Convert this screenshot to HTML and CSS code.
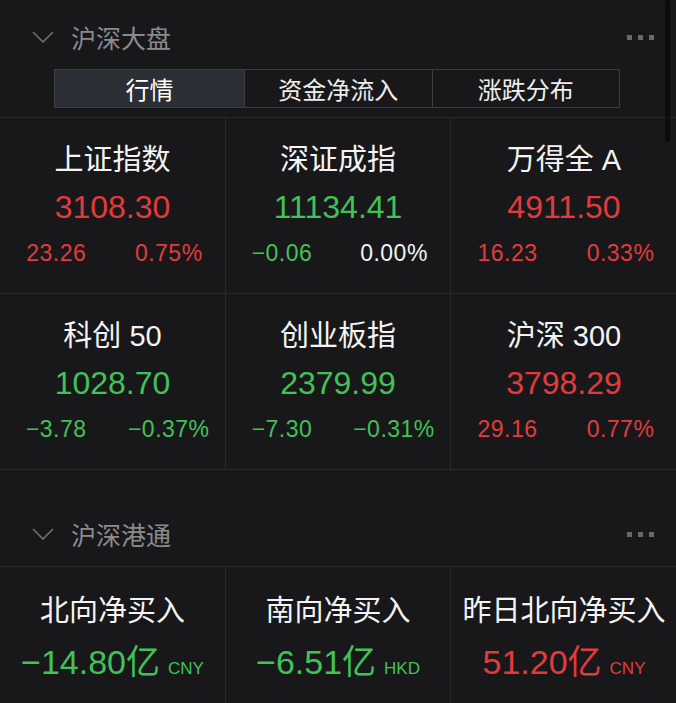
FILE: index.html
```html
<!DOCTYPE html>
<html lang="zh">
<head>
<meta charset="utf-8">
<link rel="stylesheet" href="styles.css">
</head>
<body>
<div class="page">
  <section class="block">
    <div class="sec-head">
      <svg class="chev" width="22" height="12" viewBox="0 0 22 12"><path d="M1 1 L11 11 L21 1" fill="none" stroke="#6f6f72" stroke-width="1.6"/></svg>
      <span class="sec-title">沪深大盘</span>
      <span class="more"><i></i><i></i><i></i></span>
    </div>
    <div class="tabs">
      <div class="tab active">行情</div>
      <div class="tab">资金净流入</div>
      <div class="tab">涨跌分布</div>
    </div>
    <div class="grid">
      <div class="cell">
        <div class="name">上证指数</div>
        <div class="value up">3108.30</div>
        <div class="chg up"><span>23.26</span><span>0.75%</span></div>
      </div>
      <div class="cell">
        <div class="name">深证成指</div>
        <div class="value down">11134.41</div>
        <div class="chg"><span class="down">−0.06</span><span class="flat">0.00%</span></div>
      </div>
      <div class="cell">
        <div class="name">万得全 A</div>
        <div class="value up">4911.50</div>
        <div class="chg up"><span>16.23</span><span>0.33%</span></div>
      </div>
      <div class="cell">
        <div class="name">科创 50</div>
        <div class="value down">1028.70</div>
        <div class="chg down"><span>−3.78</span><span>−0.37%</span></div>
      </div>
      <div class="cell">
        <div class="name">创业板指</div>
        <div class="value down">2379.99</div>
        <div class="chg down"><span>−7.30</span><span>−0.31%</span></div>
      </div>
      <div class="cell">
        <div class="name">沪深 300</div>
        <div class="value up">3798.29</div>
        <div class="chg up"><span>29.16</span><span>0.77%</span></div>
      </div>
    </div>
  </section>
  <section class="block">
    <div class="sec-head sec-head2">
      <svg class="chev" width="22" height="12" viewBox="0 0 22 12"><path d="M1 1 L11 11 L21 1" fill="none" stroke="#6f6f72" stroke-width="1.6"/></svg>
      <span class="sec-title">沪深港通</span>
      <span class="more"><i></i><i></i><i></i></span>
    </div>
    <div class="grid grid2">
      <div class="cell cell2">
        <div class="name">北向净买入</div>
        <div class="value2 down">−14.80<span class="yi">亿</span><span class="cur">CNY</span></div>
      </div>
      <div class="cell cell2">
        <div class="name">南向净买入</div>
        <div class="value2 down">−6.51<span class="yi">亿</span><span class="cur">HKD</span></div>
      </div>
      <div class="cell cell2">
        <div class="name">昨日北向净买入</div>
        <div class="value2 up">51.20<span class="yi">亿</span><span class="cur">CNY</span></div>
      </div>
    </div>
  </section>
  <div class="scroll-thumb"></div>
</div>
</body>
</html>
```

FILE: styles.css
```css
html, body {
  margin: 0;
  padding: 0;
  background: #18181a;
}
body {
  width: 676px;
  height: 703px;
  overflow: hidden;
  font-family: "Liberation Sans", "Noto Sans CJK SC", sans-serif;
  color: #f3f3f3;
}
.page {
  position: relative;
  width: 676px;
  height: 703px;
  overflow: hidden;
}
.sec-head {
  display: flex;
  align-items: center;
  height: 64px;
  padding-top: 5px;
  padding-left: 32px;
  padding-right: 22px;
}
.sec-head2 {
  padding-top: 32px;
}
.chev {
  display: block;
  width: 22px;
  height: 12px;
}
.sec-title {
  margin-left: 17px;
  font-family: "Noto Sans CJK SC", sans-serif;
  font-size: 25px;
  color: #8b8b8e;
}
.more {
  margin-left: auto;
  display: flex;
  gap: 6px;
}
.more i {
  display: block;
  width: 5px;
  height: 5px;
  background: #69696c;
}
.tabs {
  display: flex;
  margin: 0 56px 9px 54px;
  border: 1px solid #3c3c3f;
  height: 37px;
}
.tab {
  flex: 1;
  display: flex;
  align-items: center;
  justify-content: center;
  font-family: "Noto Sans CJK SC", sans-serif;
  font-size: 24px;
  color: #eeeeee;
  border-left: 1px solid #3c3c3f;
}
.tab:first-child {
  border-left: none;
  flex: 0 0 189px;
}
.tab.active {
  background: #2b2e34;
  color: #ffffff;
}
.grid {
  display: grid;
  grid-template-columns: 225px 224px 226px;
  grid-auto-rows: 175px;
  gap: 1px;
  background: #29292c;
  border-top: 1px solid #29292c;
  border-bottom: 1px solid #29292c;
}
.grid2 {
  grid-auto-rows: 140px;
  border-bottom: none;
}
.cell {
  background: #18181a;
  display: flex;
  flex-direction: column;
  align-items: center;
  padding-top: 25px;
}
.cell2 {
  padding-top: 27px;
}
.name {
  font-size: 29px;
  line-height: 34px;
  color: #f4f4f4;
  white-space: nowrap;
}
.value {
  margin-top: 10px;
  font-size: 32px;
  line-height: 40px;
}
.chg {
  margin-top: 12px;
  width: 100%;
  display: flex;
  font-size: 23px;
  line-height: 28px;
  letter-spacing: 0.5px;
}
.chg span {
  flex: 1;
  text-align: center;
}
.value2 {
  margin-top: 12px;
  font-size: 34px;
  line-height: 40px;
  white-space: nowrap;
}
.yi {
  font-family: "Noto Sans CJK SC", sans-serif;
  font-size: 34px;
}
.cur {
  margin-left: 8px;
  font-size: 17px;
}
.up { color: #e23b3d; }
.down { color: #41c257; }
.flat { color: #f3f3f3; }
.scroll-thumb {
  position: absolute;
  top: 0;
  left: 665px;
  width: 5px;
  height: 142px;
  border-radius: 3px;
  background: #0c0c0d;
}
```
